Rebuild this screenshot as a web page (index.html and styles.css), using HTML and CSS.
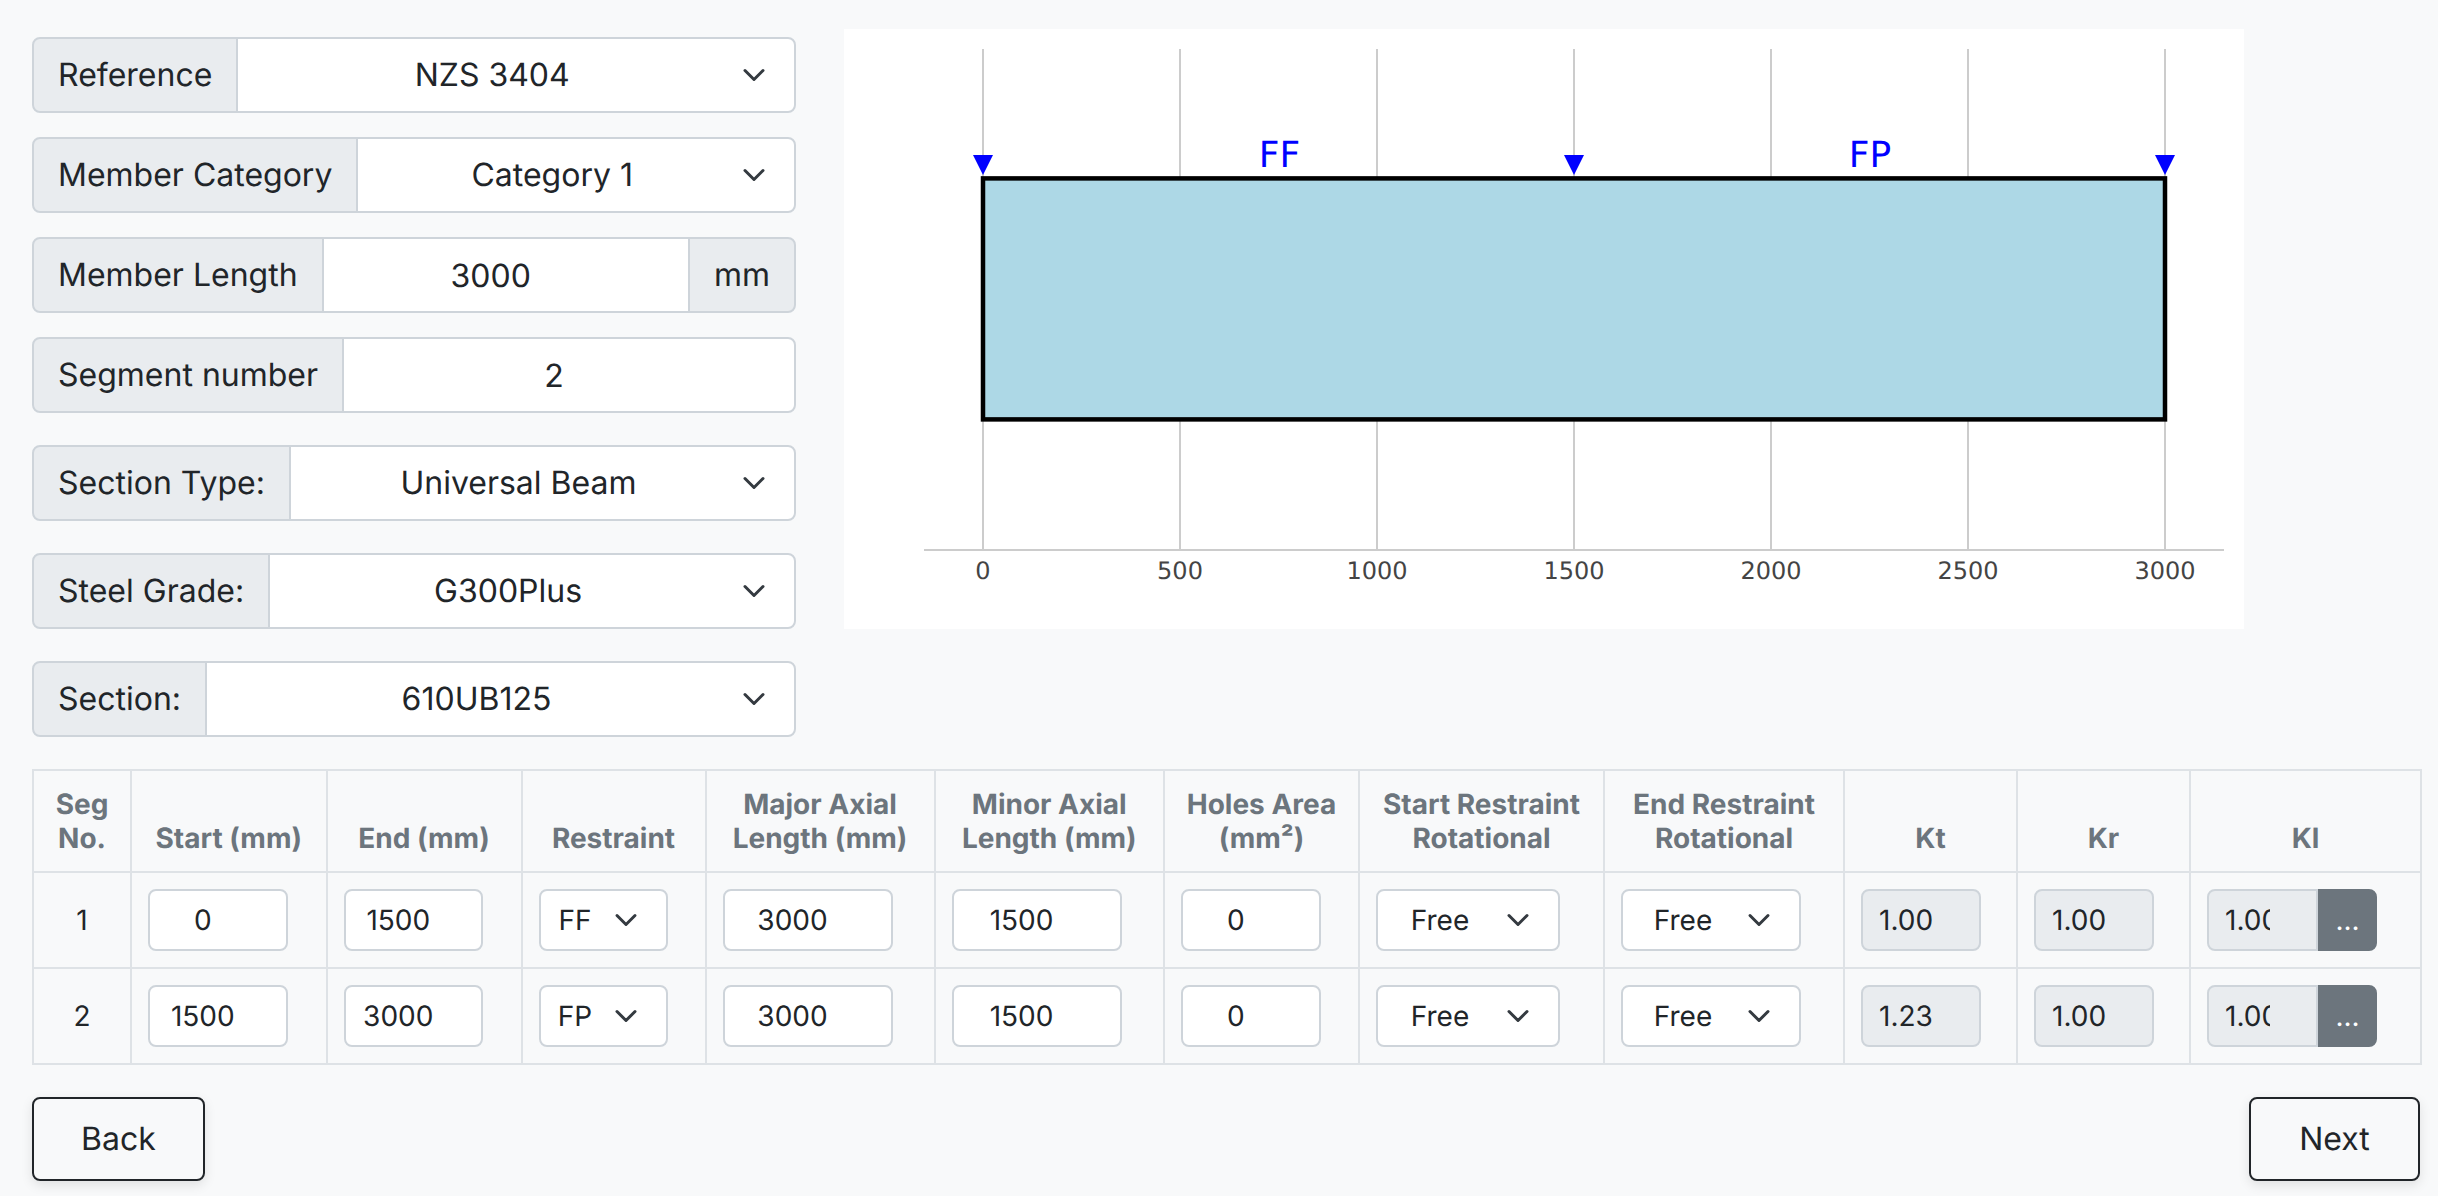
FILE: index.html
```html
<!DOCTYPE html>
<html lang="en">
<head>
<meta charset="utf-8">
<title>Member design</title>
<link rel="stylesheet" href="styles.css">
</head>
<body>
<main class="page">
  <section class="top">
    <form class="fields">
      <div class="stack tight">
        <div class="group"><label class="addon">Reference</label><select class="control select"><option>NZS 3404</option></select></div>
        <div class="group"><label class="addon">Member Category</label><select class="control select"><option>Category 1</option></select></div>
        <div class="group"><label class="addon">Member Length</label><input class="control spin" value="3000"><span class="addon">mm</span></div>
        <div class="group"><label class="addon">Segment number</label><input class="control spin" value="2"></div>
      </div>
      <div class="stack loose">
        <div class="group"><label class="addon">Section Type:</label><select class="control select"><option>Universal Beam</option></select></div>
        <div class="group"><label class="addon">Steel Grade:</label><select class="control select"><option>G300Plus</option></select></div>
        <div class="group"><label class="addon">Section:</label><select class="control select"><option>610UB125</option></select></div>
      </div>
    </form>
    <svg class="chart" viewBox="0 0 1400 600" width="1400" height="600" role="img" aria-label="Member segments">
      <g class="grid">
        <line x1="139" x2="139" y1="20" y2="521"/>
        <line x1="336" x2="336" y1="20" y2="521"/>
        <line x1="533" x2="533" y1="20" y2="521"/>
        <line x1="730" x2="730" y1="20" y2="521"/>
        <line x1="927" x2="927" y1="20" y2="521"/>
        <line x1="1124" x2="1124" y1="20" y2="521"/>
        <line x1="1321" x2="1321" y1="20" y2="521"/>
        <line x1="80" x2="1380" y1="521" y2="521"/>
      </g>
      <rect class="member" x="139" y="149.400" width="1182" height="241"/>
      <g class="marks">
        <polygon points="129,126 149,126 139,146"/>
        <polygon points="720,126 740,126 730,146"/>
        <polygon points="1311,126 1331,126 1321,146"/>
      </g>
      <g class="seglabels">
        <text x="435.500" y="138">FF</text>
        <text x="1026" y="138">FP</text>
      </g>
      <g class="ticks">
        <text x="139" y="550">0</text>
        <text x="336" y="550">500</text>
        <text x="533" y="550">1000</text>
        <text x="730" y="550">1500</text>
        <text x="927" y="550">2000</text>
        <text x="1124" y="550">2500</text>
        <text x="1321" y="550">3000</text>
      </g>
    </svg>
  </section>

  <table class="segments">
    <colgroup>
      <col class="c-seg"><col class="c-pos"><col class="c-end"><col class="c-res"><col class="c-major"><col class="c-minor">
      <col class="c-holes"><col class="c-rot"><col class="c-rot2"><col class="c-kt"><col class="c-kr"><col class="c-kl">
    </colgroup>
    <thead>
      <tr>
        <th>Seg No.</th><th>Start (mm)</th><th>End (mm)</th><th>Restraint</th>
        <th>Major Axial Length (mm)</th><th>Minor Axial Length (mm)</th><th>Holes Area (mm²)</th>
        <th>Start Restraint Rotational</th><th>End Restraint Rotational</th><th>Kt</th><th>Kr</th><th>Kl</th>
      </tr>
    </thead>
    <tbody>
      <tr>
        <td class="num">1</td>
        <td><input class="cell w-short spin" value="0"></td>
        <td><input class="cell w-short spin" value="1500"></td>
        <td><select class="cell select w-res"><option>FF</option></select></td>
        <td><input class="cell w-long spin" value="3000"></td>
        <td><input class="cell w-long spin" value="1500"></td>
        <td><input class="cell w-short spin" value="0"></td>
        <td><select class="cell select w-rot"><option>Free</option></select></td>
        <td><select class="cell select w-rot2"><option>Free</option></select></td>
        <td><input class="cell w-k ro" readonly value="1.00"></td>
        <td><input class="cell w-k ro" readonly value="1.00"></td>
        <td><div class="kl"><input class="cell ro clip" readonly value="1.000"><button type="button" class="more">...</button></div></td>
      </tr>
      <tr>
        <td class="num">2</td>
        <td><input class="cell w-short spin" value="1500"></td>
        <td><input class="cell w-short spin" value="3000"></td>
        <td><select class="cell select w-res"><option>FP</option></select></td>
        <td><input class="cell w-long spin" value="3000"></td>
        <td><input class="cell w-long spin" value="1500"></td>
        <td><input class="cell w-short spin" value="0"></td>
        <td><select class="cell select w-rot"><option>Free</option></select></td>
        <td><select class="cell select w-rot2"><option>Free</option></select></td>
        <td><input class="cell w-k ro" readonly value="1.23"></td>
        <td><input class="cell w-k ro" readonly value="1.00"></td>
        <td><div class="kl"><input class="cell ro clip" readonly value="1.000"><button type="button" class="more">...</button></div></td>
      </tr>
    </tbody>
  </table>

  <nav class="actions">
    <button type="button" class="nav-btn">Back</button>
    <button type="button" class="nav-btn">Next</button>
  </nav>
</main>
</body>
</html>
```
FILE: styles.css
```css
* { box-sizing: border-box; }

html, body { margin: 0; height: 100%; }

body {
  background: #f8f9fa;
  color: #212529;
  font-family: Inter, "Liberation Sans", sans-serif;
  font-size: 32px;
  line-height: 1.5;
  text-rendering: geometricPrecision;
}

input, select, button { text-rendering: inherit; }

.page { padding: 37px 18px 0 32px; }

.top {
  display: flex;
  align-items: flex-start;
  gap: 48px;
}

.fields {
  width: 764px;
  flex: none;
  display: flex;
  flex-direction: column;
  gap: 32px;
}

.stack { display: flex; flex-direction: column; }
.tight { gap: 24px; }
.loose { gap: 32px; }

.group { display: flex; height: 76px; }

.addon {
  flex: none;
  display: flex;
  align-items: center;
  padding: 0 24px;
  background: #e9ecef;
  border: 2px solid #ced4da;
  white-space: nowrap;
}

.group > .addon:first-child { border-radius: 8px 0 0 8px; }
.group > .addon:last-child { border-radius: 0 8px 8px 0; margin-left: -2px; }

.control {
  flex: 1;
  min-width: 0;
  margin-left: -2px;
  height: 76px;
  background-color: #fff;
  border: 2px solid #ced4da;
  color: #212529;
  font: inherit;
  text-align: center;
  padding: 12px 54px 12px 24px;
  outline: none;
}

.group > .control:last-child { border-radius: 0 8px 8px 0; }

.select {
  appearance: none;
  -webkit-appearance: none;
  background-image: url("data:image/svg+xml,%3csvg xmlns='http://www.w3.org/2000/svg' viewBox='0 0 16 16'%3e%3cpath fill='none' stroke='%23343a40' stroke-linecap='round' stroke-linejoin='round' stroke-width='2' d='M2 5l6 6 6-6'/%3e%3c/svg%3e");
  background-repeat: no-repeat;
  background-position: right 24px center;
  background-size: 32px 24px;
  padding-right: 72px;
}

.chart {
  flex: none;
  display: block;
  margin-top: -8px;
  background: #fff;
}

.grid line { stroke: #ccc; stroke-width: 2; }
.member { fill: #add8e6; stroke: #000; stroke-width: 4.5; }
.marks polygon { fill: #00f; }

.chart text {
  font-family: "DejaVu Sans", sans-serif;
  text-anchor: middle;
}

.seglabels text { fill: #00f; font-size: 36px; }
.ticks text { fill: #444; font-size: 24px; }

.segments {
  table-layout: fixed;
  width: 2388px;
  margin-top: 32px;
  border-collapse: collapse;
  font-size: 28px;
  line-height: 34px;
}

.c-seg { width: 98px; }
.c-pos { width: 195.5px; }
.c-end { width: 195px; }
.c-res { width: 184px; }
.c-major { width: 229px; }
.c-minor { width: 229.5px; }
.c-holes { width: 195px; }
.c-rot { width: 245px; }
.c-rot2 { width: 240px; }
.c-kt { width: 173px; }
.c-kr { width: 173px; }
.c-kl { width: 231px; }

.segments th,
.segments td {
  border: 2px solid #dee2e6;
  padding: 16px;
}

.segments th {
  color: #6c757d;
  font-weight: 700;
  text-align: center;
  vertical-align: bottom;
}

.segments td { vertical-align: middle; }
.segments .num { text-align: center; }

.cell {
  display: block;
  height: 62px;
  background-color: #fff;
  border: 2px solid #ced4da;
  border-radius: 8px;
  color: #212529;
  font: inherit;
  line-height: 1.5;
  padding: 8px 46px 8px 16px;
  text-align: center;
  outline: none;
}

.cell.select { padding-right: 72px; }

.w-short { width: 139.5px; }
.w-long { width: 170px; }
.w-res { width: 129px; }
.w-rot { width: 184px; }
.w-rot2 { width: 180px; }
.w-k { width: 120px; }

.ro {
  background-color: #e9ecef;
  text-align: left;
}

.kl { display: flex; width: 170px; }

.clip {
  flex: 1;
  min-width: 0;
  border-radius: 8px 0 0 8px;
}

.more {
  flex: none;
  width: 59px;
  height: 62px;
  padding: 8px 0;
  background: #6c757d;
  border: 2px solid #6c757d;
  border-radius: 0 8px 8px 0;
  color: #fff;
  font: inherit;
  line-height: 1.5;
}

.actions {
  display: flex;
  justify-content: space-between;
  margin-top: 32px;
}

.nav-btn {
  height: 84px;
  min-width: 171px;
  padding: 0 47px;
  background: transparent;
  border: 2px solid #212529;
  border-radius: 8px;
  box-shadow: 0 4px 12px rgba(0, 0, 0, .1);
  color: #212529;
  font: inherit;
}
```
